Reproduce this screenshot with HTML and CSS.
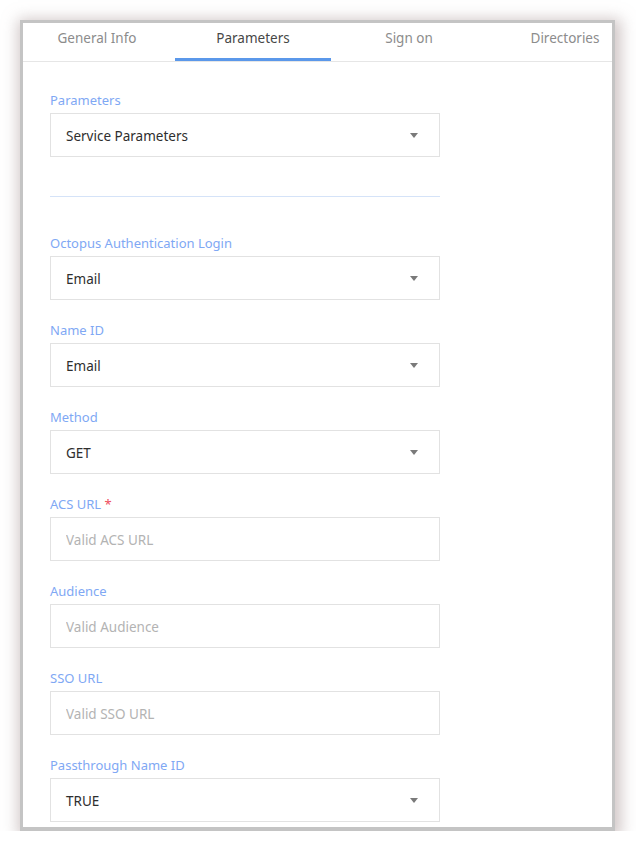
FILE: index.html
```html
<!DOCTYPE html>
<html lang="en">
<head>
<meta charset="utf-8">
<title>Application settings</title>
<link rel="stylesheet" href="styles.css">
</head>
<body>
<div class="panel">
  <nav class="tabs">
    <div class="tab">General Info</div>
    <div class="tab active">Parameters</div>
    <div class="tab">Sign on</div>
    <div class="tab">Directories</div>
  </nav>
  <form class="form">
    <div class="field">
      <label class="label">Parameters</label>
      <div class="select"><span>Service Parameters</span><i class="caret"></i></div>
    </div>
    <hr class="divider">
    <div class="field">
      <label class="label">Octopus Authentication Login</label>
      <div class="select"><span>Email</span><i class="caret"></i></div>
    </div>
    <div class="field">
      <label class="label">Name ID</label>
      <div class="select"><span>Email</span><i class="caret"></i></div>
    </div>
    <div class="field">
      <label class="label">Method</label>
      <div class="select"><span>GET</span><i class="caret"></i></div>
    </div>
    <div class="field">
      <label class="label">ACS URL <b class="req">*</b></label>
      <input class="input" type="text" placeholder="Valid ACS URL">
    </div>
    <div class="field">
      <label class="label">Audience</label>
      <input class="input" type="text" placeholder="Valid Audience">
    </div>
    <div class="field">
      <label class="label">SSO URL</label>
      <input class="input" type="text" placeholder="Valid SSO URL">
    </div>
    <div class="field">
      <label class="label">Passthrough Name ID</label>
      <div class="select"><span>TRUE</span><i class="caret"></i></div>
    </div>
  </form>
</div>
</body>
</html>
```
FILE: styles.css
```css
html, body {
  margin: 0;
  padding: 0;
  background: #ffffff;
}

body {
  font-family: "Noto Sans", "Open Sans", sans-serif;
  font-size: 13px;
  color: #333333;
}

.panel {
  margin: 20px 0 0 20px;
  width: 595px;
  height: 811px;
  box-sizing: border-box;
  border: 3px solid #c4c4c4;
  border-bottom-width: 4px;
  background: #ffffff;
  overflow: hidden;
  box-shadow: 2px 3px 14px 4px rgba(170, 152, 152, 0.55);
}

/* tab strip */
.tabs {
  display: flex;
  margin-left: -4px;
  border-bottom: 1px solid #e6e6e6;
}

.tab {
  flex: 0 0 156px;
  height: 38px;
  box-sizing: border-box;
  line-height: 30px;
  text-align: center;
  font-size: 13.5px;
  color: #8c8c8c;
  border-bottom: 3px solid transparent;
  white-space: nowrap;
}

.tab.active {
  color: #474747;
  border-bottom-color: #5b98ea;
}

/* form body */
.form {
  padding: 29px 0 0 27px;
  width: 390px;
}

.field {
  margin-bottom: 21px;
}

.label {
  display: block;
  height: 18px;
  line-height: 18px;
  margin-bottom: 4px;
  color: #80a8f4;
  font-size: 13px;
}

.req {
  color: #ee4b5c;
  font-weight: normal;
}

.select,
.input {
  display: flex;
  align-items: center;
  width: 390px;
  height: 44px;
  box-sizing: border-box;
  border: 1px solid #e2e2e2;
  padding: 2px 0 0 15px;
  font-family: inherit;
  font-size: 13.5px;
  color: #2e2e2e;
  background: #ffffff;
  outline: none;
}

.input::placeholder {
  color: #b3b3b3;
}

.select span {
  flex: 1;
}

.caret {
  width: 0;
  height: 0;
  margin: -2px 21px 0 0;
  border-left: 4.5px solid transparent;
  border-right: 4.5px solid transparent;
  border-top: 5px solid #7a7a7a;
}

.divider {
  margin: 39px 0 37px;
  border: 0;
  border-top: 1px solid #d5e3f8;
  height: 0;
}
```
